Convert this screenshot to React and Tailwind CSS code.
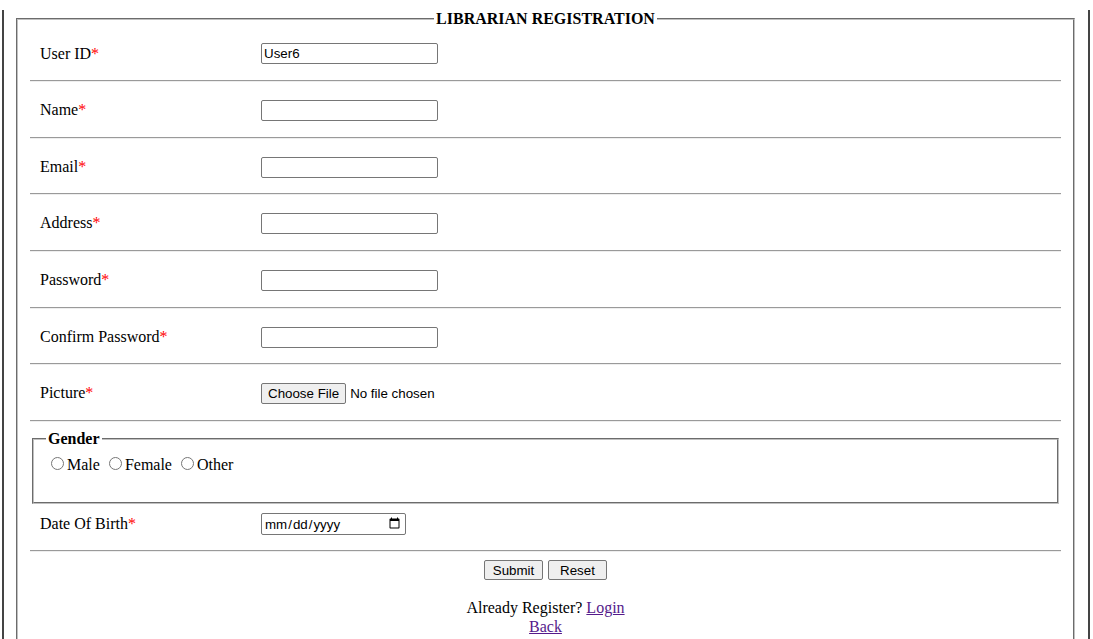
const fields = [
	{ label: 'User ID', type: 'text', value: 'User6' },
	{ label: 'Name', type: 'text' },
	{ label: 'Email', type: 'text' },
	{ label: 'Address', type: 'text' },
	{ label: 'Password', type: 'password' },
	{ label: 'Confirm Password', type: 'password' },
	{ label: 'Picture', type: 'file' },
]

const inputClass = "h-[21px] w-[177px] rounded-[2px] border border-[#767676] bg-white px-[2px] py-[1px] font-['Liberation_Sans'] text-[13.33px] leading-[normal] text-black outline-none"

const Divider = () => (
	<hr className="my-2 border-t border-b border-t-[#9a9a9a] border-b-[#eeeeee]" />
)

const Row = ({ label, children }) => (
	<div className="flex h-[38.67px] items-center pt-[2px]">
		<label className="w-[231px] pl-[10px]">
			{label}
			<span className="text-[#ff0000]">*</span>
		</label>
		<div className="flex items-center">{children}</div>
	</div>
)

const Field = ({ type, value }) => {
	if (type === 'file') {
		return (
			<input
				type="file"
				className="font-['Liberation_Sans'] text-[13.33px] leading-[normal] text-black file:mr-[4px] file:h-[21px] file:rounded-[2px] file:border file:border-[#767676] file:bg-[#efefef] file:px-[6px] file:py-[1px] file:text-black"
			/>
		)
	}
	return <input type={type} defaultValue={value} className={inputClass} />
}

const App = () => {
	return (
		<div className="min-h-[639px] bg-white font-['Liberation_Serif',serif] text-[16px] leading-[1.15] text-black">
			<div className="ml-[2px] min-h-[639px] w-[1088px] border-x-2 border-[#444444] pl-[12px]">
				<fieldset className="mt-[10px] w-[1059px] border-2 border-[#c0c0c0] px-[12px] pt-[5px] pb-[10px] [border-style:groove]">
					<legend className="mx-auto px-[2px] font-bold">LIBRARIAN REGISTRATION</legend>

					{fields.map((f) => (
						<div key={f.label}>
							<Row label={f.label}>
								<Field type={f.type} value={f.value} />
							</Row>
							<Divider />
						</div>
					))}

					<fieldset className="mx-[2px] border-2 border-[#c0c0c0] px-[12px] pt-[6px] pb-[10px] [border-style:groove]">
						<legend className="px-[2px] font-bold">Gender</legend>
						<div className="h-[18.4px]">
							<input type="radio" name="gender" className="m-[3px_3px_0_5px]" />Male{' '}
							<input type="radio" name="gender" className="m-[3px_3px_0_5px]" />Female{' '}
							<input type="radio" name="gender" className="m-[3px_3px_0_5px]" />Other
						</div>
						<div className="h-[19px]" />
					</fieldset>

					<Row label="Date Of Birth">
						<input type="date" className="h-[22px] w-[145px] rounded-[2px] border border-[#767676] bg-white px-[2px] font-['Liberation_Sans'] text-[13.33px] leading-[normal] text-black" />
					</Row>
					<Divider />

					<div className="flex justify-center gap-[5px]">
						<button className="h-[20px] w-[59px] rounded-[2px] border border-[#767676] bg-[#efefef] font-['Liberation_Sans'] text-[13.33px] leading-[normal]">Submit</button>
						<button className="h-[20px] w-[59px] rounded-[2px] border border-[#767676] bg-[#efefef] font-['Liberation_Sans'] text-[13.33px] leading-[normal]">Reset</button>
					</div>

					<div className="mt-[18px] text-center leading-[19px]">
						<div>
							Already Register? <a href="#" className="text-[#551a8b] underline">Login</a>
						</div>
						<div>
							<a href="#" className="text-[#551a8b] underline">Back</a>
						</div>
					</div>
				</fieldset>
			</div>
		</div>
	)
}

export default App
